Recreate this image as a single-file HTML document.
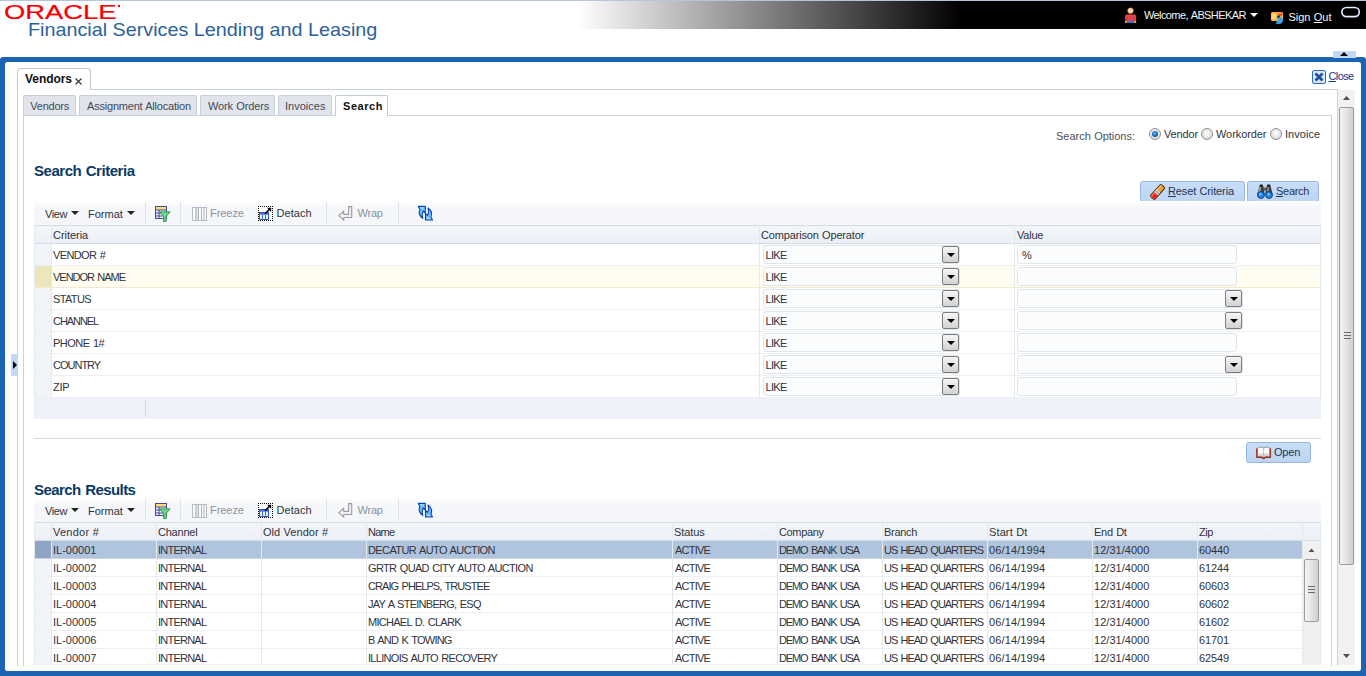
<!DOCTYPE html>
<html lang="en">
<head>
<meta charset="utf-8">
<title>Vendors - Search</title>
<style>
html,body{margin:0;padding:0;}
body{width:1366px;height:676px;overflow:hidden;background:#fff;position:relative;font-family:"Liberation Sans",Arial,sans-serif;font-size:11px;color:#222;}
.a{position:absolute;white-space:nowrap;}
.t{position:absolute;white-space:nowrap;height:14px;line-height:14px;font-size:11px;color:#30333a;}
.w{color:#f4f4f4;}
.b{font-weight:bold;}
#topline{left:0;top:0;width:1366px;height:1px;background:#b9c3d9;}
#hbar{left:0;top:1px;width:1366px;height:28px;background:linear-gradient(to right,#fff 0,#fff 577px,#000 962px,#000 100%);}
#title{left:27.6px;top:19px;height:22px;line-height:22px;font-size:18.2px;color:#2c6299;transform:scaleX(1.0863);transform-origin:0 0;}
#frame{left:0;top:57px;width:1366px;height:619px;background:#1b63b3;border-radius:3px 3px 0 0;}
#inner{left:5px;top:62px;width:1356px;height:609px;background:#fff;border-radius:2.5px;}
#opanel{left:17px;top:89px;width:1319px;height:576px;border:1px solid #cbd2dc;border-bottom:none;}
#ipanel{left:23px;top:115px;width:1307px;height:550px;border:1px solid #cbd2dc;border-bottom:none;}
.tab{position:absolute;top:95px;height:20px;box-sizing:border-box;border:1px solid #c6ced8;border-bottom:none;border-radius:2px 2px 0 0;background:#e1e5eb;}
.tab .t{color:#3f4858;}
#collapse{left:1333px;top:51px;width:23px;height:7px;background:#c3d9f1;z-index:2;}
.tri-u{position:absolute;width:0;height:0;border-left:4px solid transparent;border-right:4px solid transparent;border-bottom:4px solid #000;}
.tri-r{position:absolute;width:0;height:0;border-top:4px solid transparent;border-bottom:4px solid transparent;border-left:4px solid #000;}
#vtab{left:17px;top:68px;width:74px;height:22px;box-sizing:border-box;border:1px solid #c0c6cf;border-bottom:none;border-radius:4px 4px 0 0;background:linear-gradient(#fff,#fdfdfe);}
.h1{position:absolute;white-space:nowrap;height:20px;line-height:20px;font-size:15px;font-weight:bold;color:#0b3a66;}
.sbtrack{position:absolute;background:#f1f1f1;}
.sbthumb{position:absolute;box-sizing:border-box;border:1px solid #9c9c9c;border-radius:2px;background:linear-gradient(to right,#f3f3f3 0,#e6e6e6 45%,#cfcfcf 100%);}
.grip{position:absolute;left:4px;width:7px;height:1px;background:#6a6a6a;}
.radio{position:absolute;width:12px;height:12px;box-sizing:border-box;border:1px solid #8e8f8f;border-radius:50%;background:radial-gradient(circle at 50% 40%,#fdfdfd 0,#e3e3e3 60%,#d0d0d0 100%);}
.radio.on::after{content:"";position:absolute;left:2px;top:2px;width:6px;height:6px;border-radius:50%;background:radial-gradient(circle at 45% 40%,#6fc0ff 0,#1a6fd0 45%,#08306e 100%);}
.btn{position:absolute;box-sizing:border-box;height:21px;border:1px solid #94b6e0;border-radius:2.5px;background:linear-gradient(#c8ddf6,#bdd5f2);}
.btn .t{color:#1d3557;}
.tb{position:absolute;left:34px;width:1287px;height:24px;background:linear-gradient(#fff 0,#fdfdfe 2px,#f5f7fb 6px,#f4f6fa 100%);}
.tb .sep{position:absolute;top:1px;width:1px;height:22px;background:#dfe3e9;}
.dis{color:#8c929c;}
.dd{position:absolute;width:0;height:0;border-left:4px solid transparent;border-right:4px solid transparent;border-top:4px solid #222;}
.hdr{position:absolute;left:34px;width:1286px;box-sizing:border-box;background:linear-gradient(#f3f5f9,#ecf0f6);border-top:1px solid #d6dce5;border-bottom:1px solid #d6dce5;}
.vl{position:absolute;width:1px;background:#e4e8ef;}
.row{position:absolute;left:34px;width:1286px;box-sizing:border-box;border-bottom:1px solid #eef0f4;}
.selcell{position:absolute;left:0;top:0;width:17px;height:100%;background:#f1f4f9;}
.sel{position:absolute;box-sizing:border-box;height:19px;border:1px solid #dfe5ec;border-radius:3px;background:#fbfcfe;}
.ddb{position:absolute;right:0;top:0;width:17px;height:17px;box-sizing:border-box;border:1px solid #7d7d7d;border-radius:2px;background:linear-gradient(#f6f6f6,#e0e0e0 60%,#d2d2d2);}
.ddb::after{content:"";position:absolute;left:3.5px;top:6px;width:0;height:0;border-left:4px solid transparent;border-right:4px solid transparent;border-top:4px solid #000;}
.inp{position:absolute;box-sizing:border-box;height:19px;border:1px solid #dfe5ec;border-radius:3px;background:#fbfcfe;}
</style>
</head>
<body>
<div class="a" id="topline"></div>
<div class="a" id="hbar"></div>
<svg class="a" style="left:0;top:0" width="130" height="24" viewBox="0 0 130 24">
 <text x="4" y="19" font-family="Liberation Sans, Arial, sans-serif" font-size="19.5" fill="#f80000" stroke="#f80000" stroke-width="0.2" textLength="112.5" lengthAdjust="spacingAndGlyphs">ORACLE</text>
 <circle cx="119" cy="6" r="1.2" fill="#f80000"/>
</svg>
<div class="a" id="title">Financial Services Lending and Leasing</div>
<svg class="a" style="left:1124px;top:6px" width="14" height="18" viewBox="0 0 14 18">
 <circle cx="6.5" cy="4.7" r="3" fill="#f6d9a4" stroke="#7a3a1a" stroke-width="0.5"/>
 <path d="M1.1 10.3 Q1.1 8.4 3 8.4 H10.2 Q12.1 8.4 12.1 10.3 V15.2 H1.1 Z" fill="#e9434b"/>
 <path d="M3.1 10.5 V15 M10.1 10.5 V15" stroke="#b82a30" stroke-width="0.6"/>
 <rect x="1.1" y="15" width="2" height="2" fill="#f0a23a"/>
 <rect x="10.1" y="15" width="2" height="2" fill="#f0a23a"/>
 <rect x="3.1" y="15" width="7" height="2" fill="#2a78dc"/>
</svg>
<div class="t w" style="left:1144px;top:8px;letter-spacing:-0.6px;word-spacing:0.9px">Welcome, ABSHEKAR</div>
<div class="a" style="left:1250px;top:13px;width:0;height:0;border-left:4px solid transparent;border-right:4px solid transparent;border-top:4px solid #fff"></div>
<svg class="a" style="left:1270px;top:11px" width="14" height="14" viewBox="0 0 14 14">
 <rect x="0.9" y="1" width="12.2" height="9" rx="1.6" fill="#f3ad42"/>
 <rect x="1.6" y="2.4" width="4.6" height="6" rx="1.2" fill="#fbd47c"/>
 <path d="M6.2 3 L9 1.2 L12.6 1.6 L12.8 5 Z" fill="#f08a2e"/>
 <rect x="10.2" y="2.6" width="1.6" height="2.2" fill="#e83a34"/>
 <path d="M6.2 6.4 L9.4 5 L13 8.2 L12.6 11 L10 13.2 L5.4 12.6 L7 10 L9 9 Z" fill="#38a2f2"/>
 <path d="M6.8 6.2 L9.4 3.2 L9.6 6.6 Z" fill="#111"/>
</svg>
<div class="t w" style="left:1288.5px;top:10px;letter-spacing:-0.02px;word-spacing:0.32px">Sign <span style="text-decoration:underline">O</span>ut</div>
<svg class="a" style="left:1339px;top:5px" width="24" height="15" viewBox="0 0 24 15"><rect x="2.9" y="2.5" width="17.4" height="9.2" rx="4.6" fill="none" stroke="#e4ecff" stroke-width="1.7"/></svg>
<div class="a" id="collapse"><div class="tri-u" style="left:7px;top:1px"></div></div>
<div class="a" id="frame"></div>
<div class="a" id="inner"></div>
<div class="a" id="opanel"></div>
<div class="a" id="ipanel"></div>
<div class="a" id="vtab"><div class="t b" style="left:7px;top:3px;letter-spacing:-0.06px;word-spacing:0.36px;font-size:12px;color:#111;height:15px;line-height:15px">Vendors</div><svg style="position:absolute;left:56px;top:8px" width="9" height="9" viewBox="0 0 9 9"><path d="M1.5 1.5 L7.5 7.5 M7.5 1.5 L1.5 7.5" stroke="#333" stroke-width="1.1" fill="none"/></svg></div>
<svg class="a" style="left:1312px;top:70px" width="14" height="14" viewBox="0 0 14 14">
 <rect x="0.5" y="0.5" width="13" height="13" rx="1.5" fill="#d9e8f8" stroke="#2e6cc0"/>
 <path d="M3.5 3.5 L10.5 10.5 M10.5 3.5 L3.5 10.5" stroke="#1d4f9e" stroke-width="2.6" fill="none"/>
</svg>
<div class="t" style="left:1328.5px;top:69px;letter-spacing:-0.6px;word-spacing:0.73px;color:#12358c"><span style="text-decoration:underline">C</span>lose</div>
<div class="sbtrack" style="left:1338px;top:90px;width:17px;height:575px"></div>
<svg class="a" style="left:1338px;top:90px" width="17" height="17" viewBox="0 0 17 17"><path d="M5 10 L8.5 6 L12 10 Z" fill="#505050"/></svg>
<div class="sbthumb" style="left:1339px;top:107px;width:15px;height:458px">
 <div class="grip" style="top:224px"></div><div class="grip" style="top:227px"></div><div class="grip" style="top:230px"></div>
</div>
<svg class="a" style="left:1338px;top:648px" width="17" height="17" viewBox="0 0 17 17"><path d="M5 6 L12 6 L8.5 10 Z" fill="#505050"/></svg>
<div class="a" style="left:11px;top:354px;width:7px;height:22px;background:#c3d9f1"><div class="tri-r" style="left:2px;top:7px"></div></div>
<div class="tab" style="left:23px;width:53px"><div class="t" style="left:6.3px;top:3px;letter-spacing:-0.23px;word-spacing:0.38px">Vendors</div></div>
<div class="tab" style="left:79px;width:118px"><div class="t" style="left:7px;top:3px;letter-spacing:-0.2px;word-spacing:0.5px">Assignment Allocation</div></div>
<div class="tab" style="left:200px;width:75px"><div class="t" style="left:7px;top:3px;letter-spacing:-0.13px;word-spacing:0.43px">Work Orders</div></div>
<div class="tab" style="left:278px;width:54px"><div class="t" style="left:6px;top:3px;letter-spacing:0.02px;word-spacing:0.28px">Invoices</div></div>
<div class="tab" style="left:335px;width:53px;height:21px;background:#fff;border-color:#c4ccd6"><div class="t b" style="left:7px;top:3px;letter-spacing:0.56px;word-spacing:-0.26px;color:#111">Search</div></div>
<div class="t" style="left:1056px;top:129px;letter-spacing:-0.02px;word-spacing:0.39px;color:#4a5262">Search Options:</div>
<div class="radio on" style="left:1149px;top:128px"></div><div class="t" style="left:1164px;top:127px;letter-spacing:-0.15px;word-spacing:0.45px">Vendor</div>
<div class="radio" style="left:1201px;top:128px"></div><div class="t" style="left:1216px;top:127px;letter-spacing:-0.08px;word-spacing:0.38px">Workorder</div>
<div class="radio" style="left:1270px;top:128px"></div><div class="t" style="left:1285px;top:127px;letter-spacing:0.04px;word-spacing:0.26px">Invoice</div>
<div class="h1" style="left:34px;top:161px;letter-spacing:-0.46px;word-spacing:0.76px">Search Criteria</div>
<div class="btn" style="left:1140px;top:181px;width:105px">
 <svg style="position:absolute;left:8px;top:1px" width="18" height="18" viewBox="0 0 18 18">
  <g transform="translate(8.6 8.9) rotate(-48)">
   <rect x="-8" y="-2.9" width="16" height="5.8" rx="1.3" fill="#e9a23a" stroke="#5c210c" stroke-width="1"/>
   <rect x="-7.5" y="-2.4" width="5.2" height="4.8" rx="0.8" fill="#ee2418"/>
   <rect x="-2.3" y="-2.4" width="3.6" height="4.8" fill="#dcdcdc"/>
   <rect x="-0.9" y="-2.4" width="1" height="4.8" fill="#8a8a8a"/>
   <rect x="-7.5" y="-2.4" width="15" height="1.3" fill="#ffffff" opacity="0.35"/>
  </g>
 </svg><div class="t" style="left:27px;top:2px;letter-spacing:-0.12px;word-spacing:0.42px"><span style="text-decoration:underline">R</span>eset Criteria</div></div>
<div class="btn" style="left:1247px;top:181px;width:72px">
 <svg style="position:absolute;left:9px;top:2px" width="16" height="16" viewBox="0 0 16 16">
  <rect x="2.6" y="0.6" width="3.4" height="2.4" rx="0.8" fill="#1a1a1a"/>
  <rect x="10" y="0.6" width="3.4" height="2.4" rx="0.8" fill="#1a1a1a"/>
  <path d="M2.3 2.6 H6.6 L7.6 10 H0.4 Z" fill="#3a3a3a"/>
  <path d="M9.4 2.6 H13.7 L15.6 10 H8.4 Z" fill="#3a3a3a"/>
  <path d="M2.6 3 H4.4 L3.4 9 H0.9 Z" fill="#9a9a9a"/>
  <path d="M10.4 3 H12 L12.4 9 H10 Z" fill="#8a8a8a"/>
  <rect x="6.2" y="3.6" width="3.6" height="3" fill="#555"/>
  <circle cx="4" cy="11" r="3.4" fill="#1f8bf2" stroke="#0d3a7e" stroke-width="1"/>
  <circle cx="12" cy="11" r="3.4" fill="#1f8bf2" stroke="#0d3a7e" stroke-width="1"/>
  <circle cx="3.2" cy="10.2" r="1.1" fill="#8fd0ff"/><circle cx="11.4" cy="10.2" r="1.1" fill="#8fd0ff"/>
 </svg><div class="t" style="left:28px;top:2px;letter-spacing:-0.29px;word-spacing:0.59px"><span style="text-decoration:underline">S</span>earch</div></div>
<div class="tb" style="top:201px">
 <div class="t" style="left:11px;top:6px;letter-spacing:-0.39px;word-spacing:0.69px">View</div><div class="dd" style="left:36.5px;top:10px"></div>
 <div class="t" style="left:54px;top:6px;letter-spacing:0.01px;word-spacing:0.29px">Format</div><div class="dd" style="left:92.5px;top:10px"></div>
 <div class="sep" style="left:111px"></div>
 <svg style="position:absolute;left:121px;top:4px" width="16" height="18" viewBox="0 0 16 18">
  <rect x="0.5" y="1.5" width="11" height="12" fill="#f4f6ff" stroke="#46469c"/>
  <rect x="1" y="2" width="10" height="2.6" fill="#f6e26a"/>
  <path d="M0.5 5 H11.5 M0.5 8 H11.5 M0.5 11 H11.5 M4 5 V13.5" stroke="#46469c" stroke-width="1" fill="none"/>
  <path d="M4.3 6.9 H15.2 L11.2 11.2 V16.4 H8.6 V11.2 Z" fill="#74d98e" stroke="#27994a" stroke-width="1" stroke-linejoin="round"/>
 </svg>
 <div class="sep" style="left:146px"></div>
 <svg style="position:absolute;left:158px;top:6px" width="15" height="15" viewBox="0 0 15 15">
  <rect x="0.5" y="0.5" width="14" height="13" fill="#fbfbfb" stroke="#b9bcc2"/>
  <rect x="3" y="1" width="2.5" height="12" fill="#c9ccd2"/>
  <path d="M6.5 1 V13 M9.5 1 V13 M12 1 V13" stroke="#b0b3ba" stroke-width="1" fill="none"/>
 </svg>
 <div class="t dis" style="left:176px;top:5px;letter-spacing:-0.05px;word-spacing:0.35px">Freeze</div>
 <div style="position:absolute;left:224px;top:5px;width:13px;height:13px;border:1px dotted #000;background:#fff"></div>
 <svg style="position:absolute;left:224px;top:5px" width="15" height="15" viewBox="0 0 15 15">
  <rect x="1.5" y="6.5" width="9" height="7" fill="#e2f7ff" stroke="#3358d8" stroke-width="1"/>
  <rect x="2" y="7" width="8" height="1.7" fill="#4a6ee0"/>
  <path d="M4.5 8.7 V13 M7.5 8.7 V13" stroke="#4a6ee0" stroke-width="1"/>
  <path d="M7 7.8 L12 2.8" stroke="#000" stroke-width="1.6"/>
  <path d="M9 1.8 H13.2 V6 Z" fill="#000"/>
 </svg>
 <div class="t" style="left:242.5px;top:5px;letter-spacing:0.05px;word-spacing:0.25px">Detach</div>
 <div class="sep" style="left:292px"></div>
 <svg style="position:absolute;left:304px;top:4px" width="15" height="17" viewBox="0 0 15 17">
  <path d="M10.6 1.6 H13.7 V12.5 H5.7 V15.2 L0.8 10.7 L5.7 6.2 V9.4 H10.6 Z" fill="#f1f1f2" stroke="#9a9ca3" stroke-width="1.1" stroke-linejoin="round"/>
 </svg>
 <div class="t dis" style="left:323.5px;top:5px;letter-spacing:-0.2px;word-spacing:0.5px">Wrap</div>
 <div class="sep" style="left:364px"></div>
 <svg style="position:absolute;left:383px;top:4px" width="17" height="17" viewBox="0 0 17 17">
  <path d="M1.3 1.4 H8.3 V8 L6.3 6 Q4.4 9 5.8 13.4 Q0.6 9.6 2.9 4.4 Z" fill="#6fbdf5" stroke="#0b44b4" stroke-width="1.1" stroke-linejoin="round"/>
  <path d="M1.3 1.4 H8.3 V8 L6.3 6 Q4.4 9 5.8 13.4 Q0.6 9.6 2.9 4.4 Z" fill="#6fbdf5" stroke="#0b44b4" stroke-width="1.1" stroke-linejoin="round" transform="rotate(180 8.4 8.2)"/>
  <path d="M3.2 3 H7 M10 13.4 H13.6" stroke="#b7e2ff" stroke-width="1"/>
 </svg>
</div>
<div class="hdr" style="top:225px;height:19px"><div class="t" style="left:19px;top:2px;letter-spacing:-0.04px;word-spacing:0.34px">Criteria</div><div class="t" style="left:727px;top:2px;letter-spacing:-0.16px;word-spacing:0.46px">Comparison Operator</div><div class="t" style="left:983px;top:2px;letter-spacing:-0.23px;word-spacing:0.53px">Value</div></div>
<div class="row" style="top:244px;height:22px"><div class="selcell"></div><div class="t" style="left:19px;top:4px;letter-spacing:-0.63px;word-spacing:0.93px">VENDOR #</div><div class="sel" style="left:729px;top:1px;width:197px"><div class="t" style="left:1.5px;top:2px;letter-spacing:-0.69px;word-spacing:0.99px">LIKE</div><div class="ddb"></div></div><div class="inp" style="left:983px;top:1px;width:220px"><div class="t" style="left:4px;top:2px;letter-spacing:-0.2px;word-spacing:0px">%</div></div></div>
<div class="row" style="top:266px;height:22px;background:#fffdf0;border-bottom-color:#f1ecd0"><div class="selcell" style="background:#ece6bd"></div><div class="t" style="left:19px;top:4px;letter-spacing:-1.02px;word-spacing:1.32px">VENDOR NAME</div><div class="sel" style="left:729px;top:1px;width:197px"><div class="t" style="left:1.5px;top:2px;letter-spacing:-0.69px;word-spacing:0.99px">LIKE</div><div class="ddb"></div></div><div class="inp" style="left:983px;top:1px;width:220px"></div></div>
<div class="row" style="top:288px;height:22px"><div class="selcell"></div><div class="t" style="left:19px;top:4px;letter-spacing:-0.65px;word-spacing:0.95px">STATUS</div><div class="sel" style="left:729px;top:1px;width:197px"><div class="t" style="left:1.5px;top:2px;letter-spacing:-0.69px;word-spacing:0.99px">LIKE</div><div class="ddb"></div></div><div class="sel" style="left:983px;top:1px;width:226px"><div class="ddb"></div></div></div>
<div class="row" style="top:310px;height:22px"><div class="selcell"></div><div class="t" style="left:19px;top:4px;letter-spacing:-1.06px;word-spacing:1.36px">CHANNEL</div><div class="sel" style="left:729px;top:1px;width:197px"><div class="t" style="left:1.5px;top:2px;letter-spacing:-0.69px;word-spacing:0.99px">LIKE</div><div class="ddb"></div></div><div class="sel" style="left:983px;top:1px;width:226px"><div class="ddb"></div></div></div>
<div class="row" style="top:332px;height:22px"><div class="selcell"></div><div class="t" style="left:19px;top:4px;letter-spacing:-0.5px;word-spacing:0.8px">PHONE 1#</div><div class="sel" style="left:729px;top:1px;width:197px"><div class="t" style="left:1.5px;top:2px;letter-spacing:-0.69px;word-spacing:0.99px">LIKE</div><div class="ddb"></div></div><div class="inp" style="left:983px;top:1px;width:220px"></div></div>
<div class="row" style="top:354px;height:22px"><div class="selcell"></div><div class="t" style="left:19px;top:4px;letter-spacing:-1.0px;word-spacing:1.3px">COUNTRY</div><div class="sel" style="left:729px;top:1px;width:197px"><div class="t" style="left:1.5px;top:2px;letter-spacing:-0.69px;word-spacing:0.99px">LIKE</div><div class="ddb"></div></div><div class="sel" style="left:983px;top:1px;width:226px"><div class="ddb"></div></div></div>
<div class="row" style="top:376px;height:22px"><div class="selcell"></div><div class="t" style="left:19px;top:4px;letter-spacing:-0.21px;word-spacing:0.51px">ZIP</div><div class="sel" style="left:729px;top:1px;width:197px"><div class="t" style="left:1.5px;top:2px;letter-spacing:-0.69px;word-spacing:0.99px">LIKE</div><div class="ddb"></div></div><div class="inp" style="left:983px;top:1px;width:220px"></div></div>
<div class="a" style="left:34px;top:398px;width:1287px;height:21px;background:#eef2f8"></div><div class="vl" style="left:145px;top:400px;height:17px;background:#d5dae2"></div>
<div class="vl" style="left:34px;top:225px;height:173px"></div>
<div class="vl" style="left:51px;top:225px;height:173px"></div>
<div class="vl" style="left:759px;top:225px;height:173px"></div>
<div class="vl" style="left:1014px;top:225px;height:173px"></div>
<div class="vl" style="left:1320px;top:225px;height:173px"></div>
<div class="a" style="left:34px;top:438px;width:1287px;height:1px;background:#d3dae3"></div>
<div class="btn" style="left:1246px;top:442px;width:65px">
 <svg style="position:absolute;left:9px;top:3px" width="16" height="14" viewBox="0 0 16 14">
  <path d="M0.8 2.6 V11.4 H5.8 L7.6 12.7 L9.4 11.4 H14.4 V2.6" fill="#a32a12" stroke="#a32a12" stroke-width="1.3" stroke-linejoin="round"/>
  <path d="M1.5 2.1 Q4.6 -0.2 7.6 1.9 Q10.6 -0.2 13.7 2.1 V10.7 Q10.6 9.6 7.6 11.3 Q4.6 9.6 1.5 10.7 Z" fill="#fbfbfb" stroke="#6f6f6f" stroke-width="0.7"/>
  <path d="M1.8 7.6 H13.4 V10.4 Q10.6 9.4 7.6 11 Q4.6 9.4 1.8 10.4 Z" fill="#c9c9c9" opacity="0.75"/>
  <path d="M7.6 1.9 V11.2" stroke="#b0b0b0" stroke-width="0.8"/>
 </svg><div class="t" style="left:27px;top:2px;letter-spacing:-0.21px;word-spacing:0.51px">Open</div></div>
<div class="h1" style="left:34px;top:480px;letter-spacing:-0.56px;word-spacing:0.86px">Search Results</div>
<div class="tb" style="top:498px">
 <div class="t" style="left:11px;top:6px;letter-spacing:-0.39px;word-spacing:0.69px">View</div><div class="dd" style="left:36.5px;top:10px"></div>
 <div class="t" style="left:54px;top:6px;letter-spacing:0.01px;word-spacing:0.29px">Format</div><div class="dd" style="left:92.5px;top:10px"></div>
 <div class="sep" style="left:111px"></div>
 <svg style="position:absolute;left:121px;top:4px" width="16" height="18" viewBox="0 0 16 18">
  <rect x="0.5" y="1.5" width="11" height="12" fill="#f4f6ff" stroke="#46469c"/>
  <rect x="1" y="2" width="10" height="2.6" fill="#f6e26a"/>
  <path d="M0.5 5 H11.5 M0.5 8 H11.5 M0.5 11 H11.5 M4 5 V13.5" stroke="#46469c" stroke-width="1" fill="none"/>
  <path d="M4.3 6.9 H15.2 L11.2 11.2 V16.4 H8.6 V11.2 Z" fill="#74d98e" stroke="#27994a" stroke-width="1" stroke-linejoin="round"/>
 </svg>
 <div class="sep" style="left:146px"></div>
 <svg style="position:absolute;left:158px;top:6px" width="15" height="15" viewBox="0 0 15 15">
  <rect x="0.5" y="0.5" width="14" height="13" fill="#fbfbfb" stroke="#b9bcc2"/>
  <rect x="3" y="1" width="2.5" height="12" fill="#c9ccd2"/>
  <path d="M6.5 1 V13 M9.5 1 V13 M12 1 V13" stroke="#b0b3ba" stroke-width="1" fill="none"/>
 </svg>
 <div class="t dis" style="left:176px;top:5px;letter-spacing:-0.05px;word-spacing:0.35px">Freeze</div>
 <div style="position:absolute;left:224px;top:5px;width:13px;height:13px;border:1px dotted #000;background:#fff"></div>
 <svg style="position:absolute;left:224px;top:5px" width="15" height="15" viewBox="0 0 15 15">
  <rect x="1.5" y="6.5" width="9" height="7" fill="#e2f7ff" stroke="#3358d8" stroke-width="1"/>
  <rect x="2" y="7" width="8" height="1.7" fill="#4a6ee0"/>
  <path d="M4.5 8.7 V13 M7.5 8.7 V13" stroke="#4a6ee0" stroke-width="1"/>
  <path d="M7 7.8 L12 2.8" stroke="#000" stroke-width="1.6"/>
  <path d="M9 1.8 H13.2 V6 Z" fill="#000"/>
 </svg>
 <div class="t" style="left:242.5px;top:5px;letter-spacing:0.05px;word-spacing:0.25px">Detach</div>
 <div class="sep" style="left:292px"></div>
 <svg style="position:absolute;left:304px;top:4px" width="15" height="17" viewBox="0 0 15 17">
  <path d="M10.6 1.6 H13.7 V12.5 H5.7 V15.2 L0.8 10.7 L5.7 6.2 V9.4 H10.6 Z" fill="#f1f1f2" stroke="#9a9ca3" stroke-width="1.1" stroke-linejoin="round"/>
 </svg>
 <div class="t dis" style="left:323.5px;top:5px;letter-spacing:-0.2px;word-spacing:0.5px">Wrap</div>
 <div class="sep" style="left:364px"></div>
 <svg style="position:absolute;left:383px;top:4px" width="17" height="17" viewBox="0 0 17 17">
  <path d="M1.3 1.4 H8.3 V8 L6.3 6 Q4.4 9 5.8 13.4 Q0.6 9.6 2.9 4.4 Z" fill="#6fbdf5" stroke="#0b44b4" stroke-width="1.1" stroke-linejoin="round"/>
  <path d="M1.3 1.4 H8.3 V8 L6.3 6 Q4.4 9 5.8 13.4 Q0.6 9.6 2.9 4.4 Z" fill="#6fbdf5" stroke="#0b44b4" stroke-width="1.1" stroke-linejoin="round" transform="rotate(180 8.4 8.2)"/>
  <path d="M3.2 3 H7 M10 13.4 H13.6" stroke="#b7e2ff" stroke-width="1"/>
 </svg>
</div>
<div class="hdr" style="top:522px;height:19px"><div class="t" style="left:19px;top:2px;letter-spacing:0.24px;word-spacing:0.06px">Vendor #</div><div class="t" style="left:124px;top:2px;letter-spacing:-0.23px;word-spacing:0.53px">Channel</div><div class="t" style="left:229px;top:2px;letter-spacing:0.04px;word-spacing:0.26px">Old Vendor #</div><div class="t" style="left:334px;top:2px;letter-spacing:-0.75px;word-spacing:1.05px">Name</div><div class="t" style="left:640px;top:2px;letter-spacing:-0.08px;word-spacing:0.38px">Status</div><div class="t" style="left:745px;top:2px;letter-spacing:-0.35px;word-spacing:0.65px">Company</div><div class="t" style="left:850px;top:2px;letter-spacing:-0.29px;word-spacing:0.59px">Branch</div><div class="t" style="left:955px;top:2px;letter-spacing:0.12px;word-spacing:0.18px">Start Dt</div><div class="t" style="left:1060px;top:2px;letter-spacing:-0.26px;word-spacing:0.56px">End Dt</div><div class="t" style="left:1165px;top:2px;letter-spacing:-0.44px;word-spacing:0.74px">Zip</div></div>
<div class="row" style="top:541px;height:18px;width:1269px;overflow:hidden;background:#b0c4de;border-bottom-color:#c9d5e6"><div class="selcell" style="background:#8fa4c5"></div><div class="t" style="left:19px;top:2px;letter-spacing:-0.01px;word-spacing:0.31px">IL-00001</div><div class="t" style="left:124px;top:2px;letter-spacing:-0.77px;word-spacing:1.07px">INTERNAL</div><div class="t" style="left:334px;top:2px;letter-spacing:-0.6px;word-spacing:0.9px">DECATUR AUTO AUCTION</div><div class="t" style="left:641px;top:2px;letter-spacing:-0.79px;word-spacing:1.09px">ACTIVE</div><div class="t" style="left:745px;top:2px;letter-spacing:-1.12px;word-spacing:1.42px">DEMO BANK USA</div><div class="t" style="left:850px;top:2px;letter-spacing:-1.03px;word-spacing:1.33px">US HEAD QUARTERS</div><div class="t" style="left:955px;top:2px;letter-spacing:0.12px;word-spacing:0.08px">06/14/1994</div><div class="t" style="left:1060px;top:2px;letter-spacing:0.03px;word-spacing:0.27px">12/31/4000</div><div class="t" style="left:1165px;top:2px;letter-spacing:-0.12px;word-spacing:0.42px">60440</div></div>
<div class="row" style="top:559px;height:18px;width:1269px;overflow:hidden"><div class="selcell"></div><div class="t" style="left:19px;top:2px;letter-spacing:-0.01px;word-spacing:0.31px">IL-00002</div><div class="t" style="left:124px;top:2px;letter-spacing:-0.77px;word-spacing:1.07px">INTERNAL</div><div class="t" style="left:334px;top:2px;letter-spacing:-0.65px;word-spacing:0.95px">GRTR QUAD CITY AUTO AUCTION</div><div class="t" style="left:641px;top:2px;letter-spacing:-0.79px;word-spacing:1.09px">ACTIVE</div><div class="t" style="left:745px;top:2px;letter-spacing:-1.12px;word-spacing:1.42px">DEMO BANK USA</div><div class="t" style="left:850px;top:2px;letter-spacing:-1.03px;word-spacing:1.33px">US HEAD QUARTERS</div><div class="t" style="left:955px;top:2px;letter-spacing:0.12px;word-spacing:0.08px">06/14/1994</div><div class="t" style="left:1060px;top:2px;letter-spacing:0.03px;word-spacing:0.27px">12/31/4000</div><div class="t" style="left:1165px;top:2px;letter-spacing:-0.12px;word-spacing:0.42px">61244</div></div>
<div class="row" style="top:577px;height:18px;width:1269px;overflow:hidden"><div class="selcell"></div><div class="t" style="left:19px;top:2px;letter-spacing:-0.01px;word-spacing:0.31px">IL-00003</div><div class="t" style="left:124px;top:2px;letter-spacing:-0.77px;word-spacing:1.07px">INTERNAL</div><div class="t" style="left:334px;top:2px;letter-spacing:-0.94px;word-spacing:1.24px">CRAIG PHELPS, TRUSTEE</div><div class="t" style="left:641px;top:2px;letter-spacing:-0.79px;word-spacing:1.09px">ACTIVE</div><div class="t" style="left:745px;top:2px;letter-spacing:-1.12px;word-spacing:1.42px">DEMO BANK USA</div><div class="t" style="left:850px;top:2px;letter-spacing:-1.03px;word-spacing:1.33px">US HEAD QUARTERS</div><div class="t" style="left:955px;top:2px;letter-spacing:0.12px;word-spacing:0.08px">06/14/1994</div><div class="t" style="left:1060px;top:2px;letter-spacing:0.03px;word-spacing:0.27px">12/31/4000</div><div class="t" style="left:1165px;top:2px;letter-spacing:-0.12px;word-spacing:0.42px">60603</div></div>
<div class="row" style="top:595px;height:18px;width:1269px;overflow:hidden"><div class="selcell"></div><div class="t" style="left:19px;top:2px;letter-spacing:-0.01px;word-spacing:0.31px">IL-00004</div><div class="t" style="left:124px;top:2px;letter-spacing:-0.77px;word-spacing:1.07px">INTERNAL</div><div class="t" style="left:334px;top:2px;letter-spacing:-0.73px;word-spacing:1.03px">JAY A STEINBERG, ESQ</div><div class="t" style="left:641px;top:2px;letter-spacing:-0.79px;word-spacing:1.09px">ACTIVE</div><div class="t" style="left:745px;top:2px;letter-spacing:-1.12px;word-spacing:1.42px">DEMO BANK USA</div><div class="t" style="left:850px;top:2px;letter-spacing:-1.03px;word-spacing:1.33px">US HEAD QUARTERS</div><div class="t" style="left:955px;top:2px;letter-spacing:0.12px;word-spacing:0.08px">06/14/1994</div><div class="t" style="left:1060px;top:2px;letter-spacing:0.03px;word-spacing:0.27px">12/31/4000</div><div class="t" style="left:1165px;top:2px;letter-spacing:-0.12px;word-spacing:0.42px">60602</div></div>
<div class="row" style="top:613px;height:18px;width:1269px;overflow:hidden"><div class="selcell"></div><div class="t" style="left:19px;top:2px;letter-spacing:-0.01px;word-spacing:0.31px">IL-00005</div><div class="t" style="left:124px;top:2px;letter-spacing:-0.77px;word-spacing:1.07px">INTERNAL</div><div class="t" style="left:334px;top:2px;letter-spacing:-0.72px;word-spacing:1.02px">MICHAEL D. CLARK</div><div class="t" style="left:641px;top:2px;letter-spacing:-0.79px;word-spacing:1.09px">ACTIVE</div><div class="t" style="left:745px;top:2px;letter-spacing:-1.12px;word-spacing:1.42px">DEMO BANK USA</div><div class="t" style="left:850px;top:2px;letter-spacing:-1.03px;word-spacing:1.33px">US HEAD QUARTERS</div><div class="t" style="left:955px;top:2px;letter-spacing:0.12px;word-spacing:0.08px">06/14/1994</div><div class="t" style="left:1060px;top:2px;letter-spacing:0.03px;word-spacing:0.27px">12/31/4000</div><div class="t" style="left:1165px;top:2px;letter-spacing:-0.12px;word-spacing:0.42px">61602</div></div>
<div class="row" style="top:631px;height:18px;width:1269px;overflow:hidden"><div class="selcell"></div><div class="t" style="left:19px;top:2px;letter-spacing:-0.01px;word-spacing:0.31px">IL-00006</div><div class="t" style="left:124px;top:2px;letter-spacing:-0.77px;word-spacing:1.07px">INTERNAL</div><div class="t" style="left:334px;top:2px;letter-spacing:-0.78px;word-spacing:1.08px">B AND K TOWING</div><div class="t" style="left:641px;top:2px;letter-spacing:-0.79px;word-spacing:1.09px">ACTIVE</div><div class="t" style="left:745px;top:2px;letter-spacing:-1.12px;word-spacing:1.42px">DEMO BANK USA</div><div class="t" style="left:850px;top:2px;letter-spacing:-1.03px;word-spacing:1.33px">US HEAD QUARTERS</div><div class="t" style="left:955px;top:2px;letter-spacing:0.12px;word-spacing:0.08px">06/14/1994</div><div class="t" style="left:1060px;top:2px;letter-spacing:0.03px;word-spacing:0.27px">12/31/4000</div><div class="t" style="left:1165px;top:2px;letter-spacing:-0.12px;word-spacing:0.42px">61701</div></div>
<div class="row" style="top:649px;height:16px;width:1269px;overflow:hidden"><div class="selcell"></div><div class="t" style="left:19px;top:2px;letter-spacing:-0.01px;word-spacing:0.31px">IL-00007</div><div class="t" style="left:124px;top:2px;letter-spacing:-0.77px;word-spacing:1.07px">INTERNAL</div><div class="t" style="left:334px;top:2px;letter-spacing:-0.7px;word-spacing:1.0px">ILLINOIS AUTO RECOVERY</div><div class="t" style="left:641px;top:2px;letter-spacing:-0.79px;word-spacing:1.09px">ACTIVE</div><div class="t" style="left:745px;top:2px;letter-spacing:-1.12px;word-spacing:1.42px">DEMO BANK USA</div><div class="t" style="left:850px;top:2px;letter-spacing:-1.03px;word-spacing:1.33px">US HEAD QUARTERS</div><div class="t" style="left:955px;top:2px;letter-spacing:0.12px;word-spacing:0.08px">06/14/1994</div><div class="t" style="left:1060px;top:2px;letter-spacing:0.03px;word-spacing:0.27px">12/31/4000</div><div class="t" style="left:1165px;top:2px;letter-spacing:-0.12px;word-spacing:0.42px">62549</div></div>
<div class="vl" style="left:34px;top:522px;height:143px"></div>
<div class="vl" style="left:51px;top:522px;height:143px"></div>
<div class="vl" style="left:156px;top:522px;height:143px"></div>
<div class="vl" style="left:261px;top:522px;height:143px"></div>
<div class="vl" style="left:366px;top:522px;height:143px"></div>
<div class="vl" style="left:672px;top:522px;height:143px"></div>
<div class="vl" style="left:777px;top:522px;height:143px"></div>
<div class="vl" style="left:882px;top:522px;height:143px"></div>
<div class="vl" style="left:987px;top:522px;height:143px"></div>
<div class="vl" style="left:1092px;top:522px;height:143px"></div>
<div class="vl" style="left:1197px;top:522px;height:143px"></div>
<div class="vl" style="left:1302px;top:522px;height:143px"></div>
<div class="vl" style="left:1320px;top:522px;height:143px"></div>
<div class="sbtrack" style="left:1303px;top:541px;width:17px;height:124px;background:#f0f0f0"></div>
<svg class="a" style="left:1303px;top:541px" width="17" height="17" viewBox="0 0 17 17"><path d="M5.5 11 L8.5 7.5 L11.5 11 Z" fill="#555"/></svg>
<div class="sbthumb" style="left:1304px;top:559px;width:15px;height:63px">
 <div class="grip" style="top:26px;left:3px"></div><div class="grip" style="top:29px;left:3px"></div><div class="grip" style="top:32px;left:3px"></div>
</div>

</body>
</html>
